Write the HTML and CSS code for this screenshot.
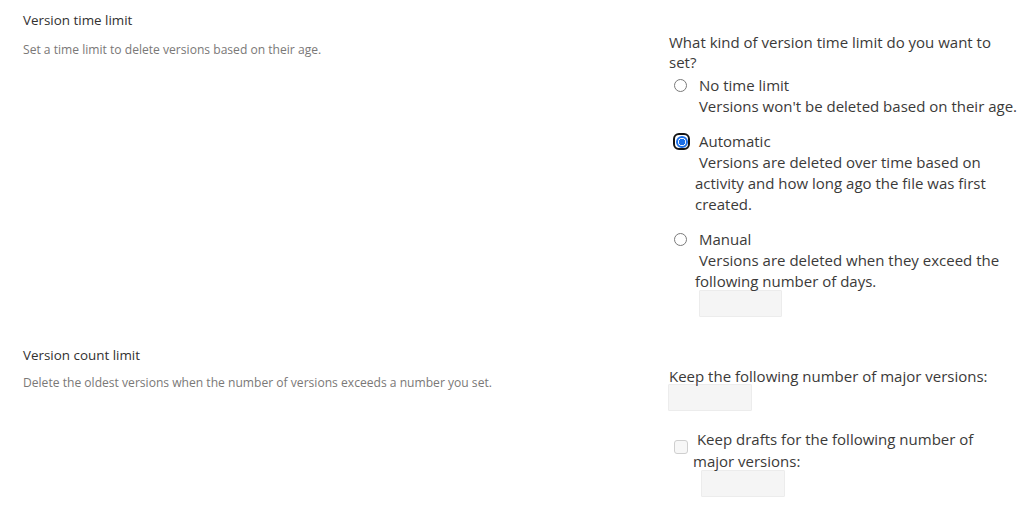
FILE: index.html
```html
<!DOCTYPE html>
<html lang="en">
<head>
<meta charset="utf-8">
<title>Version settings</title>
<link rel="stylesheet" href="styles.css">
</head>
<body>
<div class="page">
  <section class="row row-time">
    <div class="info">
      <h2 class="title">Version time limit</h2>
      <p class="desc">Set a time limit to delete versions based on their age.</p>
    </div>
    <div class="controls">
      <p class="question">What kind of version time limit do you want to set?</p>
      <div class="option">
        <label class="opt-head">
          <span class="ctl"><input class="radio" type="radio" name="limit"></span>
          <span class="opt-label">No time limit</span>
        </label>
        <div class="opt-desc">&nbsp;Versions won't be deleted based on their age.</div>
      </div>
      <div class="option">
        <label class="opt-head">
          <span class="ctl"><span class="focus-ring"><input class="radio checked" type="radio" name="limit" checked></span></span>
          <span class="opt-label">Automatic</span>
        </label>
        <div class="opt-desc">&nbsp;Versions are deleted over time based on activity and how long ago the file was first created.</div>
      </div>
      <div class="option">
        <label class="opt-head">
          <span class="ctl"><input class="radio" type="radio" name="limit"></span>
          <span class="opt-label">Manual</span>
        </label>
        <div class="opt-desc">&nbsp;Versions are deleted when they exceed the following number of days.</div>
        <input class="field field-days" type="text" disabled>
      </div>
    </div>
  </section>

  <section class="row row-count">
    <div class="info">
      <h2 class="title">Version count limit</h2>
      <p class="desc">Delete the oldest versions when the number of versions exceeds a number you set.</p>
    </div>
    <div class="controls">
      <p class="prompt">Keep the following number of major versions:</p>
      <input class="field field-major" type="text" disabled>
      <label class="check-row">
        <input class="check" type="checkbox" disabled>
        <span class="check-label">&nbsp;Keep drafts for the following number of major versions:</span>
      </label>
      <input class="field field-drafts" type="text" disabled>
    </div>
  </section>
</div>
</body>
</html>
```

FILE: styles.css
```css
html, body {
  margin: 0;
  padding: 0;
  background: #ffffff;
}

body {
  font-family: "Segoe UI", "Open Sans", sans-serif;
  color: #3b3a39;
}

.page {
  padding: 10px 0 0 23px;
}

.row {
  display: flex;
}

.row-count {
  margin-top: 28px;
}

.info {
  width: 646px;
  flex: none;
}

.title {
  margin: 0;
  font-size: 13.4px;
  line-height: 20px;
  font-weight: 400;
  color: #323130;
}

.desc {
  margin: 11px 0 0;
  font-size: 12.1px;
  line-height: 18px;
  color: #7a7877;
}

.row-count .desc {
  margin-top: 9px;
}

.controls {
  flex: 1;
  font-size: 15px;
  line-height: 21px;
  color: #3b3a39;
}

.question {
  margin: 22px 0 0;
  padding-right: 8px;
  line-height: 20px;
}

.option {
  margin-top: 14px;
}

.question + .option {
  margin-top: 3px;
}

.opt-head {
  display: flex;
  align-items: center;
}

.ctl {
  width: 30px;
  flex: none;
  display: flex;
  align-items: center;
  padding-left: 5px;
  box-sizing: border-box;
}

.radio {
  -webkit-appearance: none;
  appearance: none;
  margin: 0;
  width: 13px;
  height: 13px;
  border: 1px solid #7a7a7a;
  border-radius: 50%;
  background: #fff;
  box-sizing: border-box;
}

.radio.checked {
  width: 12px;
  height: 12px;
  border: 2px solid #1a6fe8;
  background: radial-gradient(circle, #1a6fe8 0 3px, #ffffff 3.5px);
}

.focus-ring {
  display: flex;
  align-items: center;
  justify-content: center;
  width: 13px;
  height: 13px;
  margin-left: -1px;
  border: 2px solid #151515;
  border-radius: 6px;
}

.opt-desc {
  margin-left: 26px;
  padding-right: 4px;
}

.field {
  display: block;
  margin: 0;
  padding: 0;
  height: 27px;
  box-sizing: border-box;
  border: 1px solid #ececec;
  background: #f5f5f5;
  border-radius: 1px;
}

.field-days {
  width: 83px;
  margin: -2px 0 0 30px;
}

.prompt {
  margin: 21px 0 0;
}

.field-major {
  width: 84px;
  margin: -3px 0 0 -1px;
}

.check-row {
  display: flex;
  align-items: flex-start;
  margin-top: 17px;
  line-height: 22px;
}

.check {
  -webkit-appearance: none;
  appearance: none;
  flex: none;
  margin: 12px 5px 0 5px;
  width: 14px;
  height: 14px;
  box-sizing: border-box;
  border: 1px solid #cfcfcf;
  border-radius: 3px;
  background: #f7f7f7;
}

.check-label {
  flex: 1;
  padding-right: 12px;
}

.field-drafts {
  width: 84px;
  margin: -2px 0 0 32px;
}
```
